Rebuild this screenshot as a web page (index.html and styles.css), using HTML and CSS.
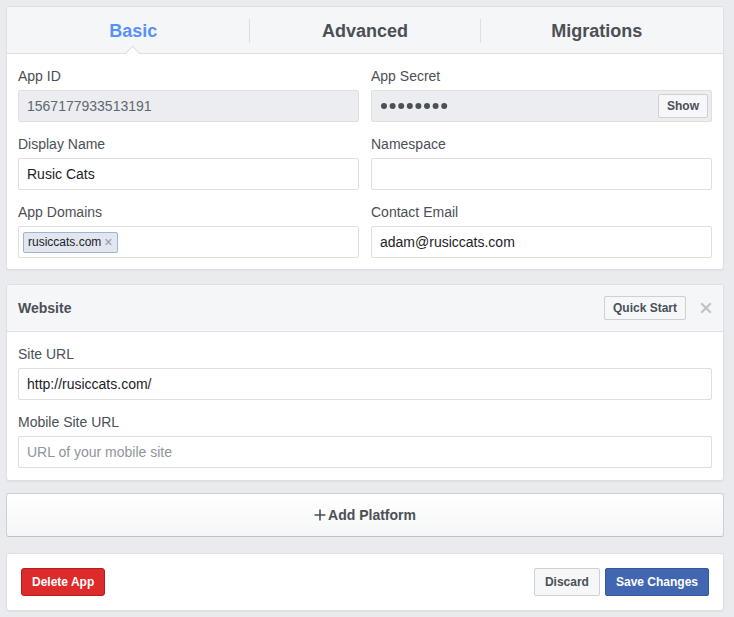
FILE: index.html
```html
<!DOCTYPE html>
<html>
<head>
<meta charset="utf-8">
<link rel="stylesheet" href="styles.css">
</head>
<body>
<div class="page">
  <section class="card">
    <nav class="tabs">
      <div class="tab active">Basic</div>
      <div class="tab">Advanced</div>
      <div class="tab">Migrations</div>
    </nav>
    <div class="body grid">
      <div class="field">
        <label>App ID</label>
        <div class="input disabled">1567177933513191</div>
      </div>
      <div class="field">
        <label>App Secret</label>
        <div class="input disabled secret">
          <svg class="dots" width="70" height="8" viewBox="0 0 70 8" aria-label="hidden secret">
            <circle cx="3" cy="4" r="3"/><circle cx="11.6" cy="4" r="3"/><circle cx="20.2" cy="4" r="3"/><circle cx="28.8" cy="4" r="3"/>
            <circle cx="37.4" cy="4" r="3"/><circle cx="46" cy="4" r="3"/><circle cx="54.6" cy="4" r="3"/><circle cx="63.2" cy="4" r="3"/>
          </svg>
          <button class="btn">Show</button>
        </div>
      </div>
      <div class="field">
        <label>Display Name</label>
        <div class="input">Rusic Cats</div>
      </div>
      <div class="field">
        <label>Namespace</label>
        <div class="input"></div>
      </div>
      <div class="field">
        <label>App Domains</label>
        <div class="input tags"><span class="tag">rusiccats.com <span class="tag-x">×</span></span></div>
      </div>
      <div class="field">
        <label>Contact Email</label>
        <div class="input">adam@rusiccats.com</div>
      </div>
    </div>
  </section>

  <section class="card website">
    <header class="card-head">
      <span class="head-title">Website</span>
      <div class="head-actions">
        <button class="btn">Quick Start</button>
        <span class="close">
          <svg width="12" height="12" viewBox="0 0 12 12"><path d="M2 2L10 10M10 2L2 10" stroke="#bec2c9" stroke-width="2.2" stroke-linecap="square"/></svg>
        </span>
      </div>
    </header>
    <div class="body">
      <div class="field">
        <label>Site URL</label>
        <div class="input">http://rusiccats.com/</div>
      </div>
      <div class="field">
        <label>Mobile Site URL</label>
        <div class="input placeholder">URL of your mobile site</div>
      </div>
    </div>
  </section>

  <button class="add-platform">
    <svg class="plus" width="12" height="12" viewBox="0 0 12 12"><path d="M6 0.5V11.5M0.5 6H11.5" stroke="#4b4f56" stroke-width="1.6"/></svg>
    Add Platform
  </button>

  <section class="card footer">
    <button class="btn danger">Delete App</button>
    <div class="footer-right">
      <button class="btn">Discard</button>
      <button class="btn primary">Save Changes</button>
    </div>
  </section>
</div>
</body>
</html>
```

FILE: styles.css
```css
* { box-sizing: border-box; }
html, body { margin: 0; padding: 0; }
body {
  background: #e9ebee;
  font-family: "Liberation Sans", Arial, Helvetica, sans-serif;
  color: #4b4f56;
  font-size: 14px;
}
.page {
  padding: 6px 10px 6px 6px;
  display: flex;
  flex-direction: column;
  gap: 12px;
}
.card {
  background: #fff;
  border: 1px solid #dddfe2;
  border-radius: 3px;
  box-shadow: 0 1px 1px rgba(0,0,0,0.04);
}
.tabs {
  display: flex;
  padding: 1px 11px 0;
  height: 47px;
  background: #f5f6f7;
  border-bottom: 1px solid #dddfe2;
  border-radius: 3px 3px 0 0;
  align-items: center;
}
.tab {
  flex: 1;
  text-align: center;
  font-size: 18px;
  font-weight: bold;
  color: #4b4f56;
  line-height: 24px;
  border-left: 1px solid #dddfe2;
  position: relative;
}
.tab:first-child { border-left: none; }
.tab.active { color: #5890ff; }
.tab.active::after {
  content: "";
  position: absolute;
  left: 50%;
  bottom: -16px;
  width: 10px;
  height: 10px;
  margin-left: -6px;
  background: #fff;
  border-left: 1px solid #dddfe2;
  border-top: 1px solid #dddfe2;
  transform: rotate(45deg);
}
.body {
  padding: 14px 11px 11px;
  display: flex;
  flex-direction: column;
  gap: 14px;
}
.website .body { padding-bottom: 12px; }
.grid {
  display: grid;
  grid-template-columns: 1fr 1fr;
  column-gap: 12px;
  row-gap: 14px;
}
.field { display: flex; flex-direction: column; gap: 6px; }
.field label {
  font-size: 14px;
  line-height: 16px;
  color: #4b4f56;
}
.input {
  height: 32px;
  border: 1px solid #dddfe2;
  border-radius: 2px;
  background: #fff;
  padding: 0 8px;
  display: flex;
  align-items: center;
  font-size: 14px;
  color: #1d2129;
}
.input.disabled {
  background: #ebedf0;
  color: #606770;
}
.input.secret { justify-content: space-between; padding-right: 3px; }
.dots { fill: #4b4f56; margin-left: 1px; }
.input.placeholder { color: #90949c; }
.input.tags { padding: 0 4px; }
.tag {
  display: inline-flex;
  align-items: center;
  height: 21px;
  padding: 0 4px;
  background: #e1e6ef;
  border: 1px solid #9cb4d8;
  border-radius: 2px;
  font-size: 12px;
  color: #1d2129;
  gap: 3px;
}
.tag-x { color: #9197a3; font-size: 14px; }
.btn {
  font-family: inherit;
  font-size: 12px;
  font-weight: bold;
  color: #4b4f56;
  background: #f6f7f9;
  border: 1px solid #ced0d4;
  border-radius: 2px;
  height: 24px;
  padding: 0 8px;
  cursor: pointer;
}
.website { margin-top: 2px; }
.card-head {
  height: 47px;
  background: #f5f6f7;
  border-bottom: 1px solid #dddfe2;
  border-radius: 3px 3px 0 0;
  display: flex;
  align-items: center;
  justify-content: space-between;
  padding: 0 11px;
}
.head-title { font-size: 14px; font-weight: bold; color: #4b4f56; }
.head-actions { display: flex; align-items: center; gap: 14px; }
.close { display: flex; width: 12px; height: 12px; }
.add-platform {
  font-family: inherit;
  height: 44px;
  background: linear-gradient(#fff, #f5f6f7);
  border: 1px solid #ccd0d5;
  border-bottom-color: #bec2c9;
  border-radius: 3px;
  font-size: 14px;
  font-weight: bold;
  color: #4b4f56;
  display: flex;
  align-items: center;
  justify-content: center;
  gap: 2px;
}
.plus { display: block; }
.footer {
  display: flex;
  align-items: center;
  justify-content: space-between;
  padding: 14px;
  margin-top: 4px;
}
.footer .btn { height: 28px; padding: 0 10px; }
.footer-right { display: flex; gap: 5px; }
.btn.danger { background: #dd2a2a; border-color: #b51d1d; color: #fff; border-radius: 3px; }
.btn.primary { background: #4267b2; border-color: #365899; color: #fff; }
```
